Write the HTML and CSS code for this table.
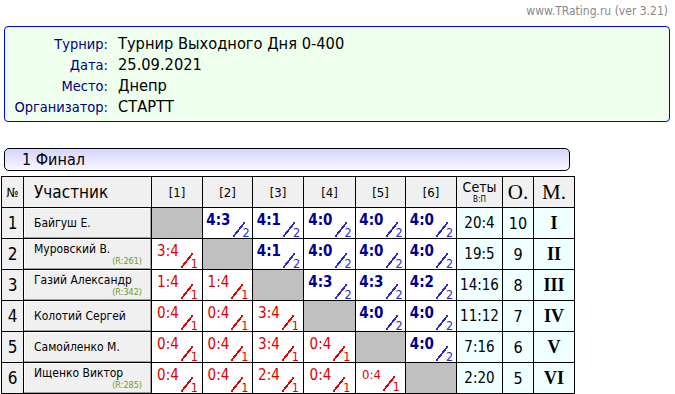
FILE: index.html
```html
<!DOCTYPE html>
<html>
<head>
<meta charset="utf-8">
<link rel="stylesheet" href="styles.css">
</head>
<body>
<div class="site">www.TRating.ru (ver 3.21)</div>
<div class="info">
  <div class="lbl">Турнир:</div><div class="val">Турнир Выходного Дня 0-400</div>
  <div class="lbl">Дата:</div><div class="val">25.09.2021</div>
  <div class="lbl">Место:</div><div class="val">Днепр</div>
  <div class="lbl">Организатор:</div><div class="val">СТАРТТ</div>
</div>
<div class="stage">1 Финал</div>
<table class="grid">
  <colgroup>
    <col class="c-no"><col class="c-name"><col class="c51"><col class="c50"><col class="c51"><col class="c52"><col class="c50"><col class="c51"><col class="c-sets"><col class="c-pts"><col class="c-pl">
  </colgroup>
  <tr class="head">
    <th class="no">№</th><th class="part">Участник</th><th>[1]</th><th>[2]</th><th>[3]</th><th>[4]</th><th>[5]</th><th>[6]</th>
    <th class="sets">Сеты<span>В:П</span></th><th class="ser">O.</th><th class="ser">M.</th>
  </tr>
  <tr>
    <td class="n">1</td><td class="name"><span class="nm">Байгуш Е.</span></td>
    <td class="x"></td>
    <td class="w"><span class="res">4:3<span class="sl"></span><sub>2</sub></span></td><td class="w"><span class="res">4:1<span class="sl"></span><sub>2</sub></span></td><td class="w"><span class="res">4:0<span class="sl"></span><sub>2</sub></span></td><td class="w"><span class="res">4:0<span class="sl"></span><sub>2</sub></span></td><td class="w"><span class="res">4:0<span class="sl"></span><sub>2</sub></span></td>
    <td class="s">20:4</td><td class="p">10</td><td class="m">I</td>
  </tr>
  <tr>
    <td class="n">2</td><td class="name"><span class="nm">Муровский В.</span><span class="r">(R:261)</span></td>
    <td class="l"><span class="res">3:4<span class="sl"></span><sub>1</sub></span></td><td class="x"></td>
    <td class="w"><span class="res">4:1<span class="sl"></span><sub>2</sub></span></td><td class="w"><span class="res">4:0<span class="sl"></span><sub>2</sub></span></td><td class="w"><span class="res">4:0<span class="sl"></span><sub>2</sub></span></td><td class="w"><span class="res">4:0<span class="sl"></span><sub>2</sub></span></td>
    <td class="s">19:5</td><td class="p">9</td><td class="m">II</td>
  </tr>
  <tr>
    <td class="n">3</td><td class="name"><span class="nm">Газий Александр</span><span class="r">(R:342)</span></td>
    <td class="l"><span class="res">1:4<span class="sl"></span><sub>1</sub></span></td><td class="l"><span class="res">1:4<span class="sl"></span><sub>1</sub></span></td><td class="x"></td>
    <td class="w"><span class="res">4:3<span class="sl"></span><sub>2</sub></span></td><td class="w"><span class="res">4:3<span class="sl"></span><sub>2</sub></span></td><td class="w"><span class="res">4:2<span class="sl"></span><sub>2</sub></span></td>
    <td class="s">14:16</td><td class="p">8</td><td class="m">III</td>
  </tr>
  <tr>
    <td class="n">4</td><td class="name"><span class="nm">Колотий Сергей</span></td>
    <td class="l"><span class="res">0:4<span class="sl"></span><sub>1</sub></span></td><td class="l"><span class="res">0:4<span class="sl"></span><sub>1</sub></span></td><td class="l"><span class="res">3:4<span class="sl"></span><sub>1</sub></span></td><td class="x"></td>
    <td class="w"><span class="res">4:0<span class="sl"></span><sub>2</sub></span></td><td class="w"><span class="res">4:0<span class="sl"></span><sub>2</sub></span></td>
    <td class="s">11:12</td><td class="p">7</td><td class="m">IV</td>
  </tr>
  <tr>
    <td class="n">5</td><td class="name"><span class="nm">Самойленко М.</span></td>
    <td class="l"><span class="res">0:4<span class="sl"></span><sub>1</sub></span></td><td class="l"><span class="res">0:4<span class="sl"></span><sub>1</sub></span></td><td class="l"><span class="res">3:4<span class="sl"></span><sub>1</sub></span></td><td class="l"><span class="res">0:4<span class="sl"></span><sub>1</sub></span></td><td class="x"></td>
    <td class="w"><span class="res">4:0<span class="sl"></span><sub>2</sub></span></td>
    <td class="s">7:16</td><td class="p">6</td><td class="m">V</td>
  </tr>
  <tr>
    <td class="n">6</td><td class="name"><span class="nm">Ищенко Виктор</span><span class="r">(R:285)</span></td>
    <td class="l"><span class="res">0:4<span class="sl"></span><sub>1</sub></span></td><td class="l"><span class="res">0:4<span class="sl"></span><sub>1</sub></span></td><td class="l"><span class="res">2:4<span class="sl"></span><sub>1</sub></span></td><td class="l"><span class="res">0:4<span class="sl"></span><sub>1</sub></span></td><td class="l small"><span class="res">0:4<span class="sl"></span><sub>1</sub></span></td><td class="x"></td>
    <td class="s">2:20</td><td class="p">5</td><td class="m">VI</td>
  </tr>
</table>
</body>
</html>
```
FILE: styles.css
```css
html, body {
  margin: 0;
  padding: 0;
  background: #fff;
  font-family: Tahoma, "DejaVu Sans Condensed", "Liberation Sans", sans-serif;
  color: #000;
}
.site {
  height: 26px;
  box-sizing: border-box;
  padding: 4px 7px 0 0;
  text-align: right;
  font-size: 12px;
  color: #888;
}
.info {
  margin: 0 5px 0 4px;
  height: 96px;
  box-sizing: border-box;
  border: 1px solid #0000ff;
  border-radius: 4px;
  background: #eeffee;
  display: grid;
  grid-template-columns: 103px 1fr;
  column-gap: 10px;
  grid-auto-rows: 21px;
  padding-top: 6px;
  align-items: center;
}
.lbl {
  text-align: right;
  font-size: 14.5px;
  color: #000080;
}
.val {
  font-size: 16.3px;
}
.stage {
  margin: 26px 0 0 4px;
  width: 566px;
  height: 23px;
  box-sizing: border-box;
  border: 1px solid #000;
  border-radius: 5px;
  background: linear-gradient(to bottom, #d4d4ff, #f8f8ff);
  padding-left: 17px;
  font-size: 16px;
  line-height: 21px;
}
.grid {
  margin: 5px 0 0 1px;
  border-collapse: collapse;
  table-layout: fixed;
  width: 573px;
}
.c-no { width: 22px; }
.c-name { width: 128px; }
.c50 { width: 50px; }
.c51 { width: 51px; }
.c52 { width: 52px; }
.c-sets { width: 46px; }
.c-pts { width: 31px; }
.c-pl { width: 41px; }
.grid td, .grid th {
  border: 1px solid #000;
  padding: 0;
  height: 30px;
  text-align: center;
  vertical-align: middle;
  font-weight: normal;
}
.head th {
  background: #f0f0f0;
  font-size: 13px;
}
.head th.part {
  text-align: left;
  padding-left: 10px;
  font-size: 17px;
}
.head th.sets {
  font-size: 14px;
  line-height: 15px;
}
.head th.sets span {
  display: block;
  font-size: 8px;
  line-height: 9px;
}
.head th.ser {
  font-family: "Liberation Serif", serif;
  font-size: 21px;
}
td.n {
  background: #f0f0f0;
  font-size: 17px;
}
td.name {
  background: #f0f0f0;
  text-align: left;
  padding: 0 9px 0 10px;
  font-size: 12px;
  box-shadow: inset -1px -1px 0 #a0a0a0, inset 1px 1px 0 #fff;
}
td.name .nm {
  display: block;
  line-height: 14px;
}
td.name .r {
  display: block;
  text-align: right;
  font-size: 9px;
  line-height: 10px;
  color: #6f9a1a;
}
td.x {
  background: #c0c0c0;
}
td.w, td.l {
  white-space: nowrap;
  font-size: 15px;
  line-height: 14px;
  vertical-align: top;
  padding: 0 0 0 1px;
}
.res {
  display: inline-block;
  height: 22px;
  margin-top: 5px;
  vertical-align: top;
  line-height: 14px;
}
td.w {
  color: #000090;
  font-weight: bold;
}
td.l {
  color: #e00000;
}
td.l.small {
  font-size: 13px;
}
.sl {
  display: inline-block;
  width: 12px;
  height: 15px;
  margin-left: 2px;
  vertical-align: -12px;
  background: linear-gradient(to bottom right, transparent calc(50% - 0.9px), currentColor calc(50% - 0.9px), currentColor calc(50% + 0.9px), transparent calc(50% + 0.9px));
}
td.w .sl, td.w sub {
  color: #2a2ad0;
}
td sub {
  font-weight: normal;
  font-size: 12.5px;
  line-height: 0;
  vertical-align: -12px;
  margin-left: -2px;
}
td.s {
  background: #f0ffff;
  font-size: 15px;
}
td.p {
  background: #f0ffff;
  font-size: 16px;
}
td.m {
  background: #f0ffff;
  font-family: "Liberation Serif", serif;
  font-weight: bold;
  font-size: 18px;
}
```
